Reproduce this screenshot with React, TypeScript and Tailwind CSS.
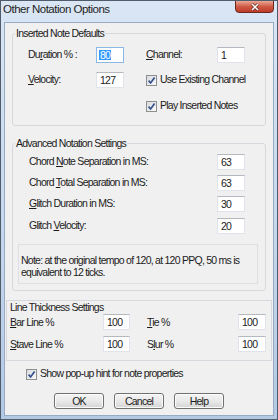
import React from "react";

const U = ({ c }: { c: string }) => <span className="underline underline-offset-[1px]">{c}</span>;

const Input = ({ children, focus }: { children: React.ReactNode; focus?: boolean }) => (
  <div
    className={
      "h-[16px] bg-white flex items-center pl-[3px] border leading-none " +
      (focus
        ? "border-[#8ab7e6]"
        : "border-[#e0e4ea] border-t-[#b4b8bf]")
    }
  >
    {children}
  </div>
);

const Check = () => (
  <span className="w-[11px] h-[11px] shrink-0 border border-[#8e8f8f] bg-gradient-to-br from-[#d9dbe0] to-[#fafafa] flex items-center justify-center">
    <svg viewBox="0 0 9 9" className="w-[9px] h-[9px]">
      <path d="M1.6 4.6 L3.6 7 L7.6 1.6" stroke="#354f8c" strokeWidth="1.7" fill="none" />
    </svg>
  </span>
);

const Btn = ({ children }: { children: React.ReactNode }) => (
  <div className="w-[50px] h-[16px] rounded-[3px] border border-[#707070] bg-gradient-to-b from-[#f4f4f4] via-[#e9e9e9] to-[#d4d4d4] flex items-center justify-center leading-none shadow-[inset_0_0_0_1px_#fcfcfc]">
    {children}
  </div>
);

export default function App() {
  return (
    <div className="w-[278px] h-[420px] flex flex-col bg-gradient-to-b from-[#dae6f4] via-[#c7d9ee] to-[#b3c9e3] border border-[#4f5c6c] font-['Liberation_Sans',Arial,sans-serif] text-[10.5px] tracking-[-0.75px] text-[#1c1c1c] overflow-hidden">
      {/* title bar */}
      <div className="h-[21px] flex items-start justify-between shrink-0">
        <span className="text-[11.5px] tracking-[-0.5px] leading-[15px] pl-[2px] pt-[1px] text-[#1e1e1e]">Other Notation Options</span>
        <div className="w-[39px] h-[13px] mr-[3px] -mt-[1px] rounded-b-[4px] border border-[#6b2a20] bg-gradient-to-b from-[#e9a896] via-[#cf5a45] to-[#bd3a27] flex items-center justify-center">
          <svg viewBox="0 0 10 8" className="w-[10px] h-[8px]">
            <path d="M2 1 L8 7 M8 1 L2 7" stroke="#5a1a12" strokeWidth="2.6" />
            <path d="M2 1 L8 7 M8 1 L2 7" stroke="#ffffff" strokeWidth="1.6" />
          </svg>
        </div>
      </div>

      {/* client */}
      <div className="flex-1 mx-[3px] mb-[3px] bg-[#f0f0f0] border border-[#97abc4] flex flex-col">
        {/* Inserted Note Defaults */}
        <fieldset className="mx-[7px] mt-[4px] border border-[#d5d9dd] rounded-[3px] px-0 pb-[11px]">
          <legend className="ml-[2px] px-[1px] leading-[13px]">Inserted Note Defaults</legend>
          <div className="flex flex-col gap-[9px] pt-[7px] pl-[15px]">
            <div className="flex items-center h-[16px]">
              <span className="w-[68px]">Du<U c="r" />ation %&nbsp;:</span>
              <div className="w-[28px]">
                <Input focus>
                  <span className="bg-[#3399ff] text-white px-[1px] -ml-[1px]">80</span>
                </Input>
              </div>
              <span className="w-[71px] ml-[22px]"><U c="C" />hannel:</span>
              <div className="w-[28px]"><Input>1</Input></div>
            </div>
            <div className="flex items-center h-[16px]">
              <span className="w-[68px]"><U c="V" />elocity:</span>
              <div className="w-[28px]"><Input>127</Input></div>
              <div className="ml-[22px] flex items-center gap-[3px]">
                <Check />
                <span>Use Existing Channel</span>
              </div>
            </div>
            <div className="flex items-center h-[16px] mt-[1px]">
              <div className="ml-[118px] flex items-center gap-[3px]">
                <Check />
                <span>Play Inserted Notes</span>
              </div>
            </div>
          </div>
        </fieldset>

        {/* Advanced Notation Settings */}
        <fieldset className="mx-[7px] mt-[11px] border border-[#d5d9dd] rounded-[3px] px-0 pb-[6px]">
          <legend className="ml-[2px] px-[1px] leading-[13px]">Advanced Notation Settings</legend>
          <div className="flex flex-col gap-[5px] pt-[4px] pl-[16px]">
            <div className="flex items-center h-[16px]">
              <span className="w-[188px]">Chord <U c="N" />ote Separation in MS:</span>
              <div className="w-[28px]"><Input>63</Input></div>
            </div>
            <div className="flex items-center h-[16px]">
              <span className="w-[188px]">Chord <U c="T" />otal Separation in MS:</span>
              <div className="w-[28px]"><Input>63</Input></div>
            </div>
            <div className="flex items-center h-[16px]">
              <span className="w-[188px]"><U c="G" />litch Duration in MS:</span>
              <div className="w-[28px]"><Input>30</Input></div>
            </div>
            <div className="flex items-center h-[16px] mt-[1px]">
              <span className="w-[188px]">Glitch <U c="V" />elocity:</span>
              <div className="w-[28px]"><Input>20</Input></div>
            </div>
          </div>
          <div className="ml-[5px] mr-[7px] mt-[10px] border border-[#dcdfe3] pl-[2px] pt-[9px] pb-[5px] leading-[12px] whitespace-nowrap">
            Note: at the original tempo of 120, at 120 PPQ, 50 ms is
            <br />
            equivalent to 12 ticks.
          </div>
        </fieldset>

        {/* Line Thickness Settings */}
        <div className="mx-[1px] mt-[9px] border border-[#d5d9dd] pl-[3px] pb-[8px] leading-[12px]">
          <div>Line Thickness Settings</div>
          <div className="flex flex-col gap-[6px] mt-[1px]">
            <div className="flex items-center h-[16px]">
              <span className="w-[93px]"><U c="B" />ar Line %</span>
              <div className="w-[27px]"><Input>100</Input></div>
              <span className="w-[91px] ml-[17px]"><U c="T" />ie %</span>
              <div className="w-[28px]"><Input>100</Input></div>
            </div>
            <div className="flex items-center h-[16px]">
              <span className="w-[93px]"><U c="S" />tave Line %</span>
              <div className="w-[27px]"><Input>100</Input></div>
              <span className="w-[91px] ml-[17px]">S<U c="l" />ur %</span>
              <div className="w-[28px]"><Input>100</Input></div>
            </div>
          </div>
        </div>

        <div className="flex items-center gap-[3px] ml-[21px] mt-[7px] h-[12px]">
          <Check />
          <span>Show pop-up hint for note properties</span>
        </div>

        <div className="flex justify-center gap-[10px] mt-[13px]">
          <Btn>OK</Btn>
          <Btn>Cancel</Btn>
          <Btn>Help</Btn>
        </div>
      </div>
    </div>
  );
}
